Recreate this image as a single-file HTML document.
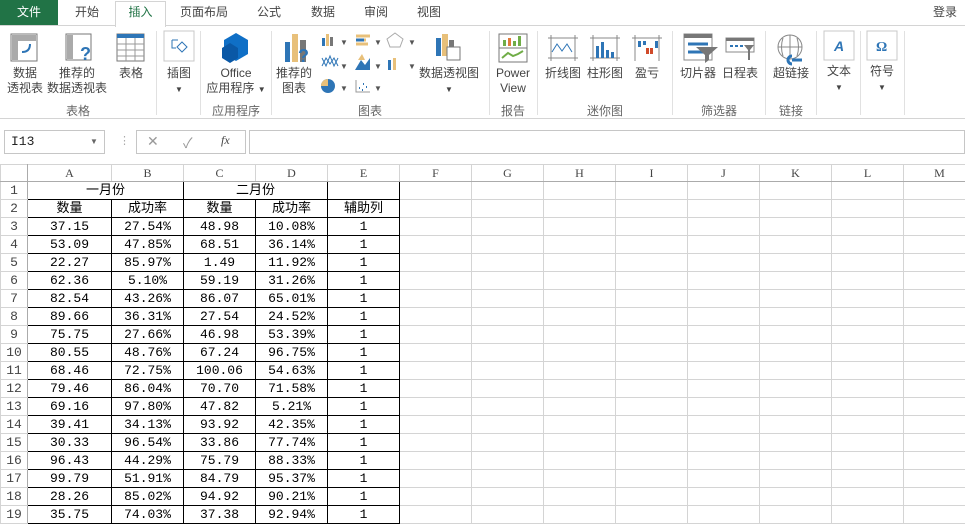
<!DOCTYPE html>
<html><head><meta charset="utf-8"><style>
*{margin:0;padding:0;box-sizing:border-box}
body{width:965px;height:524px;overflow:hidden;background:#fff;font-family:"Liberation Sans","Noto Sans CJK SC",sans-serif;position:relative;color:#444}
.a{position:absolute}
.tab{position:absolute;top:0;height:26px;line-height:25px;font-size:12px;color:#444;text-align:center}
.lbl{position:absolute;font-size:12px;color:#444;text-align:center;line-height:15px;white-space:nowrap}
.grp{position:absolute;top:102px;font-size:12px;color:#666;text-align:center}
.sep{position:absolute;top:31px;width:1px;height:84px;background:#e1e1e1}
table{border-collapse:collapse;position:absolute;left:0;top:164px;table-layout:fixed;width:975px;min-width:975px}
td{height:18px;border:1px solid #d4d4d4;font-family:"Liberation Mono","Noto Sans CJK SC",monospace;font-size:13px;color:#000;text-align:center;padding:0;line-height:16px;overflow:hidden;white-space:nowrap}
tr.h td{height:16px;background:#fff;color:#444;font-family:"Liberation Serif",serif;font-size:12px;border-color:#d4d4d4;border-bottom:1px solid #ababab}
td.r{color:#444;font-size:13px;text-align:center;border-right:1px solid #ababab}
td.b{border:1px solid #000}
</style></head><body>
<div class="a" style="left:0;top:0;width:58px;height:26px;background:#217346"></div>
<div class="tab" style="left:0;width:58px;color:#fff">文件</div>
<div class="tab" style="left:62px;width:50px">开始</div>
<div class="a" style="left:115px;top:1px;width:51px;height:26px;border:1px solid #d4d4d4;border-bottom:none;background:#fff"></div>
<div class="tab" style="left:115px;width:51px;color:#217346">插入</div>
<div class="tab" style="left:172px;width:64px">页面布局</div>
<div class="tab" style="left:246px;width:46px">公式</div>
<div class="tab" style="left:300px;width:46px">数据</div>
<div class="tab" style="left:353px;width:46px">审阅</div>
<div class="tab" style="left:406px;width:46px">视图</div>
<div class="tab" style="left:925px;width:40px">登录</div>
<div class="a" style="left:0;top:25px;width:115px;height:1px;background:#d4d4d4"></div>
<div class="a" style="left:166px;top:25px;width:799px;height:1px;background:#d4d4d4"></div>
<div class="a" style="left:0;top:118px;width:965px;height:1px;background:#d4d4d4"></div>
<div class="sep" style="left:156px"></div><div class="sep" style="left:200px"></div><div class="sep" style="left:271px"></div>
<div class="sep" style="left:489px"></div><div class="sep" style="left:537px"></div><div class="sep" style="left:672px"></div>
<div class="sep" style="left:765px"></div><div class="sep" style="left:816px"></div><div class="sep" style="left:860px"></div><div class="sep" style="left:904px"></div>
<svg class="a" style="left:0;top:30px" width="965" height="70">
<g fill="none" stroke="#777"><rect x="11" y="4" width="26" height="27"/><rect x="66" y="4" width="25" height="26"/></g>
<rect x="12" y="5" width="6" height="25" fill="#aaa"/><rect x="12" y="5" width="24" height="6" fill="#aaa"/>
<path d="M22 22 q8 0 8-8" stroke="#2e75b6" stroke-width="2" fill="none"/>
<rect x="67" y="5" width="6" height="24" fill="#aaa"/><text x="80" y="30" font-size="18" font-weight="bold" fill="#2e75b6" font-family="Liberation Sans">?</text>
<rect x="117" y="4" width="27" height="27" fill="#fff" stroke="#777"/><rect x="117" y="4" width="27" height="4" fill="#2e75b6"/>
<path d="M117 14h27M117 20h27M117 26h27M126 8v23M135 8v23" stroke="#999"/>
<rect x="164" y="1" width="30" height="30" fill="#fff" stroke="#c8c8c8"/>
<path d="M172 10h6M172 10v8h4M182 12l5 5-5 5-5-5z" stroke="#2e75b6" fill="none"/>
<path d="M224 10l12-7 12 7v14l-12 7-12-7z" fill="#0f6fc6"/><path d="M222 18l8-5 8 5v10l-8 5-8-5z" fill="#0a58a6"/>
<rect x="285" y="12" width="5" height="20" fill="#2e75b6"/><rect x="292" y="4" width="6" height="28" fill="#e8c07a"/><rect x="300" y="10" width="6" height="22" fill="#777"/>
<text x="298" y="32" font-size="18" font-weight="bold" fill="#2e75b6" font-family="Liberation Sans">?</text>
<rect x="322" y="8" width="3" height="8" fill="#2e75b6"/><rect x="326" y="4" width="3" height="12" fill="#e8c07a"/><rect x="330" y="7" width="3" height="9" fill="#777"/>
<path d="M356 6h14M356 10h10M356 14h12" stroke="#e8c07a" stroke-width="3"/><path d="M356 10h8" stroke="#2e75b6" stroke-width="3"/>
<path d="M395 3l8 6-3 8h-10l-3-8z" stroke="#aaa" fill="none"/>
<path d="M322 28l4 8 4-10 4 10 4-8M322 36l4-8 4 6 4-6 4 8" stroke="#2e75b6" fill="none"/>
<path d="M355 40l6-10 4 5 5-7v12z" fill="#2e75b6"/><path d="M358 30l4-6 3 6z" fill="#e8c07a"/>
<rect x="388" y="30" width="3" height="10" fill="#2e75b6"/><rect x="393" y="28" width="3" height="12" fill="#e8c07a"/>
<circle cx="328" cy="56" r="7" fill="#2e75b6"/><path d="M328 56v-7a7 7 0 0 0-7 7z" fill="#e8c07a"/>
<path d="M356 50v12h14" stroke="#999" fill="none"/><path d="M359 58h1M363 54h1M366 57h1M362 60h1" stroke="#2e75b6" stroke-width="2"/>
<rect x="436" y="8" width="5" height="18" fill="#2e75b6"/><rect x="442" y="4" width="6" height="22" fill="#e8c07a"/><rect x="449" y="10" width="5" height="12" fill="#777"/>
<rect x="447" y="17" width="13" height="13" fill="#fff" stroke="#777"/>
<rect x="499" y="4" width="28" height="28" fill="#fff" stroke="#777"/><path d="M499 18h28" stroke="#777"/>
<rect x="503" y="10" width="3" height="6" fill="#70ad47"/><rect x="508" y="8" width="3" height="8" fill="#e07a3a"/><rect x="513" y="11" width="3" height="5" fill="#70ad47"/><rect x="518" y="6" width="3" height="10" fill="#70ad47"/>
<path d="M502 28l6-5 5 3 5-2 5-3" stroke="#70ad47" stroke-width="2" fill="none"/>
<path d="M548 8h30M548 28h30M551 5v26M575 5v26" stroke="#888"/><path d="M552 22l5-8 5 7 5-7 5 8" stroke="#2e75b6" fill="none"/>
<path d="M590 8h30M590 28h30M593 5v26M617 5v26" stroke="#888"/><rect x="596" y="16" width="3" height="12" fill="#2e75b6"/><rect x="601" y="12" width="3" height="16" fill="#2e75b6"/><rect x="606" y="20" width="3" height="8" fill="#2e75b6"/><rect x="611" y="22" width="3" height="6" fill="#2e75b6"/>
<path d="M632 8h30M635 5v26M659 5v26" stroke="#888"/><rect x="638" y="11" width="3" height="6" fill="#2e75b6"/><rect x="643" y="11" width="3" height="4" fill="#2e75b6"/><rect x="646" y="18" width="3" height="6" fill="#d04a2a"/><rect x="650" y="18" width="3" height="6" fill="#d04a2a"/><rect x="655" y="11" width="3" height="7" fill="#2e75b6"/>
<rect x="684" y="4" width="28" height="26" fill="#fff" stroke="#888"/><rect x="684" y="4" width="28" height="4" fill="#777"/><path d="M688 14h20M688 22h20" stroke="#2e75b6" stroke-width="3"/><path d="M696 17l9 8v8l4-3v-5l9-8z" fill="#777"/>
<rect x="726" y="8" width="28" height="14" fill="#fff" stroke="#888"/><rect x="726" y="8" width="28" height="3" fill="#777"/><path d="M730 16h14" stroke="#2e75b6" stroke-dasharray="3 2" stroke-width="2"/><path d="M744 15h10l-4 5v10h-2v-10z" fill="#777"/>
<circle cx="790" cy="17" r="12" fill="none" stroke="#888"/><path d="M778 17h24M790 5v24M783 8q-3 9 0 18M797 8q3 9 0 18" stroke="#888" fill="none"/><path d="M792 30h10M792 26a4 4 0 0 0 0 8" stroke="#2e75b6" stroke-width="3" fill="none"/>
<rect x="824" y="1" width="30" height="29" fill="#fff" stroke="#c8c8c8"/><text x="834" y="21" font-size="14" font-weight="bold" font-style="italic" fill="#2e75b6" font-family="Liberation Sans">A</text>
<rect x="867" y="1" width="30" height="29" fill="#fff" stroke="#c8c8c8"/><text x="876" y="21" font-size="14" font-weight="bold" fill="#2e75b6" font-family="Liberation Serif">Ω</text>
</svg>
<div class="a" style="left:340px;top:38px;font-size:8px;color:#555">▼</div>
<div class="a" style="left:374px;top:38px;font-size:8px;color:#555">▼</div>
<div class="a" style="left:408px;top:38px;font-size:8px;color:#555">▼</div>
<div class="a" style="left:340px;top:62px;font-size:8px;color:#555">▼</div>
<div class="a" style="left:374px;top:62px;font-size:8px;color:#555">▼</div>
<div class="a" style="left:408px;top:62px;font-size:8px;color:#555">▼</div>
<div class="a" style="left:340px;top:84px;font-size:8px;color:#555">▼</div>
<div class="a" style="left:374px;top:84px;font-size:8px;color:#555">▼</div>
<div class="lbl" style="left:4px;top:66px;width:42px">数据<br>透视表</div>
<div class="lbl" style="left:46px;top:66px;width:62px">推荐的<br>数据透视表</div>
<div class="lbl" style="left:112px;top:66px;width:38px">表格</div>
<div class="lbl" style="left:160px;top:66px;width:38px">插图<br><span style="font-size:8px">▼</span></div>
<div class="lbl" style="left:204px;top:66px;width:64px">Office<br>应用程序 <span style="font-size:8px">▼</span></div>
<div class="lbl" style="left:274px;top:66px;width:40px">推荐的<br>图表</div>
<div class="lbl" style="left:416px;top:66px;width:66px">数据透视图<br><span style="font-size:8px">▼</span></div>
<div class="lbl" style="left:490px;top:66px;width:46px">Power<br>View</div>
<div class="lbl" style="left:543px;top:66px;width:40px">折线图</div>
<div class="lbl" style="left:585px;top:66px;width:40px">柱形图</div>
<div class="lbl" style="left:627px;top:66px;width:40px">盈亏</div>
<div class="lbl" style="left:678px;top:66px;width:40px">切片器</div>
<div class="lbl" style="left:720px;top:66px;width:40px">日程表</div>
<div class="lbl" style="left:770px;top:66px;width:42px">超链接</div>
<div class="lbl" style="left:820px;top:64px;width:38px">文本<br><span style="font-size:8px">▼</span></div>
<div class="lbl" style="left:863px;top:64px;width:38px">符号<br><span style="font-size:8px">▼</span></div>
<div class="grp" style="left:60px;width:36px">表格</div>
<div class="grp" style="left:205px;width:62px">应用程序</div>
<div class="grp" style="left:350px;width:40px">图表</div>
<div class="grp" style="left:493px;width:40px">报告</div>
<div class="grp" style="left:583px;width:44px">迷你图</div>
<div class="grp" style="left:696px;width:46px">筛选器</div>
<div class="grp" style="left:770px;width:42px">链接</div>
<div class="a" style="left:4px;top:130px;width:101px;height:24px;border:1px solid #c6c6c6;font-family:'Liberation Mono',monospace;font-size:13px;line-height:22px;padding-left:6px;color:#222">I13</div>
<div class="a" style="left:90px;top:137px;font-size:8px;color:#666">▼</div>
<div class="a" style="left:119px;top:134px;font-size:11px;color:#aaa">⋮</div>
<div class="a" style="left:136px;top:130px;width:110px;height:24px;border:1px solid #c6c6c6"></div>
<div class="a" style="left:147px;top:133px;font-size:14px;color:#999">✕</div>
<div class="a" style="left:183px;top:133px;font-size:14px;color:#999">✓</div>
<div class="a" style="left:221px;top:133px;font-size:12px;color:#444;font-family:'Liberation Serif',serif;font-style:italic">fx</div>
<div class="a" style="left:249px;top:130px;width:716px;height:24px;border:1px solid #c6c6c6"></div>
<table>
<colgroup><col style="width:27px"><col style="width:84px"><col style="width:72px"><col style="width:72px"><col style="width:72px"><col style="width:72px"><col style="width:72px"><col style="width:72px"><col style="width:72px"><col style="width:72px"><col style="width:72px"><col style="width:72px"><col style="width:72px"><col style="width:72px"></colgroup>
<tr class="h"><td style="border-right:1px solid #ababab"></td><td>A</td><td>B</td><td>C</td><td>D</td><td>E</td><td>F</td><td>G</td><td>H</td><td>I</td><td>J</td><td>K</td><td>L</td><td>M</td></tr>
<tr><td class="r">1</td><td class="b" colspan="2">一月份</td><td class="b" colspan="2">二月份</td><td class="b"></td><td></td><td></td><td></td><td></td><td></td><td></td><td></td><td></td></tr>
<tr><td class="r">2</td><td class="b">数量</td><td class="b">成功率</td><td class="b">数量</td><td class="b">成功率</td><td class="b">辅助列</td><td></td><td></td><td></td><td></td><td></td><td></td><td></td><td></td></tr>
<tr><td class="r">3</td><td class="b">37.15</td><td class="b">27.54%</td><td class="b">48.98</td><td class="b">10.08%</td><td class="b">1</td><td></td><td></td><td></td><td></td><td></td><td></td><td></td><td></td></tr>
<tr><td class="r">4</td><td class="b">53.09</td><td class="b">47.85%</td><td class="b">68.51</td><td class="b">36.14%</td><td class="b">1</td><td></td><td></td><td></td><td></td><td></td><td></td><td></td><td></td></tr>
<tr><td class="r">5</td><td class="b">22.27</td><td class="b">85.97%</td><td class="b">1.49</td><td class="b">11.92%</td><td class="b">1</td><td></td><td></td><td></td><td></td><td></td><td></td><td></td><td></td></tr>
<tr><td class="r">6</td><td class="b">62.36</td><td class="b">5.10%</td><td class="b">59.19</td><td class="b">31.26%</td><td class="b">1</td><td></td><td></td><td></td><td></td><td></td><td></td><td></td><td></td></tr>
<tr><td class="r">7</td><td class="b">82.54</td><td class="b">43.26%</td><td class="b">86.07</td><td class="b">65.01%</td><td class="b">1</td><td></td><td></td><td></td><td></td><td></td><td></td><td></td><td></td></tr>
<tr><td class="r">8</td><td class="b">89.66</td><td class="b">36.31%</td><td class="b">27.54</td><td class="b">24.52%</td><td class="b">1</td><td></td><td></td><td></td><td></td><td></td><td></td><td></td><td></td></tr>
<tr><td class="r">9</td><td class="b">75.75</td><td class="b">27.66%</td><td class="b">46.98</td><td class="b">53.39%</td><td class="b">1</td><td></td><td></td><td></td><td></td><td></td><td></td><td></td><td></td></tr>
<tr><td class="r">10</td><td class="b">80.55</td><td class="b">48.76%</td><td class="b">67.24</td><td class="b">96.75%</td><td class="b">1</td><td></td><td></td><td></td><td></td><td></td><td></td><td></td><td></td></tr>
<tr><td class="r">11</td><td class="b">68.46</td><td class="b">72.75%</td><td class="b">100.06</td><td class="b">54.63%</td><td class="b">1</td><td></td><td></td><td></td><td></td><td></td><td></td><td></td><td></td></tr>
<tr><td class="r">12</td><td class="b">79.46</td><td class="b">86.04%</td><td class="b">70.70</td><td class="b">71.58%</td><td class="b">1</td><td></td><td></td><td></td><td></td><td></td><td></td><td></td><td></td></tr>
<tr><td class="r">13</td><td class="b">69.16</td><td class="b">97.80%</td><td class="b">47.82</td><td class="b">5.21%</td><td class="b">1</td><td></td><td></td><td></td><td></td><td></td><td></td><td></td><td></td></tr>
<tr><td class="r">14</td><td class="b">39.41</td><td class="b">34.13%</td><td class="b">93.92</td><td class="b">42.35%</td><td class="b">1</td><td></td><td></td><td></td><td></td><td></td><td></td><td></td><td></td></tr>
<tr><td class="r">15</td><td class="b">30.33</td><td class="b">96.54%</td><td class="b">33.86</td><td class="b">77.74%</td><td class="b">1</td><td></td><td></td><td></td><td></td><td></td><td></td><td></td><td></td></tr>
<tr><td class="r">16</td><td class="b">96.43</td><td class="b">44.29%</td><td class="b">75.79</td><td class="b">88.33%</td><td class="b">1</td><td></td><td></td><td></td><td></td><td></td><td></td><td></td><td></td></tr>
<tr><td class="r">17</td><td class="b">99.79</td><td class="b">51.91%</td><td class="b">84.79</td><td class="b">95.37%</td><td class="b">1</td><td></td><td></td><td></td><td></td><td></td><td></td><td></td><td></td></tr>
<tr><td class="r">18</td><td class="b">28.26</td><td class="b">85.02%</td><td class="b">94.92</td><td class="b">90.21%</td><td class="b">1</td><td></td><td></td><td></td><td></td><td></td><td></td><td></td><td></td></tr>
<tr><td class="r">19</td><td class="b">35.75</td><td class="b">74.03%</td><td class="b">37.38</td><td class="b">92.94%</td><td class="b">1</td><td></td><td></td><td></td><td></td><td></td><td></td><td></td><td></td></tr>
</table>
</body></html>
